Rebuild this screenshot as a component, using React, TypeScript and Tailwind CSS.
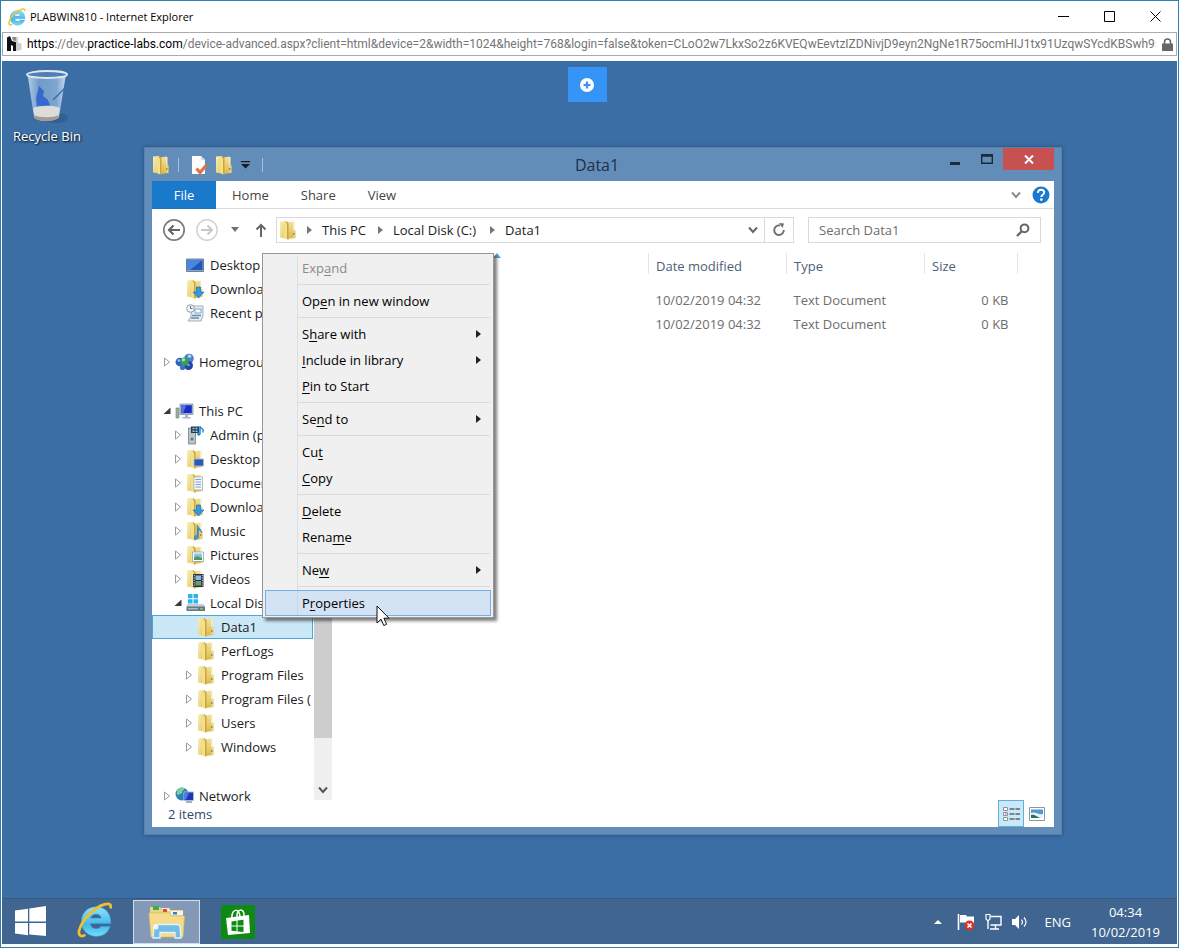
import { ReactNode } from "react";

const sans = "font-['Open_Sans','Noto_Sans',sans-serif]";

function IeLogo({ className }: { className: string }) {
  return (
    <svg viewBox="0 0 34 34" className={className} aria-hidden="true">
      <defs>
        <linearGradient id="ieBlue" x1="0" y1="0" x2="0" y2="1">
          <stop offset="0" stopColor="#8fe4fb" />
          <stop offset="0.6" stopColor="#45b6ea" />
          <stop offset="1" stopColor="#74dcf8" />
        </linearGradient>
      </defs>
      <path
        fill="url(#ieBlue)"
        stroke="#2f8fd0"
        strokeWidth=".5"
        fillRule="evenodd"
        d="M18 4.500C9.500 4.500 4 11 4 18.500S9.500 32.500 18 32.500c7 0 11.500-3.800 13.500-9.700h-9c-.8 1.500-2.200 2.300-4.500 2.300-3 0-5-1.600-5.200-4.600H32C32.500 11 27 4.500 18 4.500zM12.900 15.200C13.500 12.800 15.400 11.500 18 11.500s4.500 1.300 4.900 3.700z"
      />
      <path
        fill="none"
        stroke="#f0c02c"
        strokeWidth="2.600"
        strokeLinecap="round"
        d="M7 31.500C3 33.500 0.800 31 2.300 26 5 17 15 5.500 26 2.300c4-1.200 6.300-.5 5.800 2.700"
      />
    </svg>
  );
}

function Folder({ children }: { children?: ReactNode }) {
  return (
    <svg viewBox="0 0 18 20" className="h-5 w-[18px] shrink-0" aria-hidden="true">
      <defs>
        <linearGradient id="flap" x1="0" x2="1" y1="0" y2="1">
          <stop offset="0" stopColor="#fbf0b8" />
          <stop offset="1" stopColor="#e6c760" />
        </linearGradient>
        <linearGradient id="back" x1="0" x2="0" y1="0" y2="1">
          <stop offset="0" stopColor="#f3e09a" />
          <stop offset="1" stopColor="#dcb94f" />
        </linearGradient>
      </defs>
      <path d="M8 2.500l6.500-1v8l2 1V18l-8.500 1z" fill="url(#back)" />
      <path d="M14 2h1.500v8H14z" fill="#f8edb6" />
      <path d="M14.500 10.500h1.800v7.300l-1.800.2z" fill="#edd68a" />
      <path d="M1 1.500L7 1v17.500l-6-1z" fill="url(#flap)" />
      <path d="M7 1l2.500 2v17L7 18.500z" fill="#cda63a" />
      <path d="M5.200 2.500L8 3.500V19.500l-2.800-1.400z" fill="#f3df8e" />
      <path d="M14 13h1.500v2H14z" fill="#8c9a48" />
      {children}
    </svg>
  );
}

const desktopMark = <path d="M8 10h9.500v7H8z" fill="#2b59b8" stroke="#9dbbe0" strokeWidth=".9" />;
const downMark = (
  <path d="M10.500 8h4v5H18l-5.500 6L7 13h3.500z" fill="#2f9be8" stroke="#1c6fb5" strokeWidth=".7" />
);
const docMark = (
  <g>
    <path d="M8 4h8.500v13H8z" fill="#f6f8fb" stroke="#9aa6b4" strokeWidth=".7" />
    <path d="M9.500 6.500h5.500M9.500 9h5.500M9.500 11.500h5.500M9.500 14h5.500" stroke="#6f93c0" strokeWidth=".9" />
  </g>
);
const musicMark = (
  <path d="M11 4c1 3 5 3.500 4.500 8-.5-2-2-3-3-3v6.500c0 2-1.500 3-3 3S7.500 16 9 15s2 0 2-.5z" fill="#3c9ad6" stroke="#1f6a9f" strokeWidth=".4" />
);
const picMark = (
  <g>
    <path d="M6.500 7h11v9.500h-11z" fill="#fff" stroke="#8696a8" strokeWidth=".7" />
    <path d="M8 8.500h8V15H8z" fill="#8cc5ea" />
    <path d="M8 13l3-2 5 2v2H8z" fill="#4f9a5b" />
  </g>
);
const vidMark = (
  <g>
    <path d="M7 5h10.500v13H7z" fill="#2c3340" />
    <path d="M9.500 6.500h5.500v4.500H9.500z" fill="#8db8e6" />
    <path d="M9.500 12h5.500v4.500H9.500z" fill="#6aa06e" />
    <path d="M8.200 6v11M16.300 6v11" stroke="#dfe5ec" strokeWidth="1" strokeDasharray="1.200 1.200" />
  </g>
);

function Monitor() {
  return (
    <svg viewBox="0 0 18 20" className="h-5 w-[18px] shrink-0" aria-hidden="true">
      <path d="M.5 4h17v12.500H.5z" fill="#8fa9c2" stroke="#4d6f92" strokeWidth=".8" />
      <path d="M1.500 5h15v10h-15z" fill="#2456b4" />
      <path d="M1.500 5h15L4 15H1.500z" fill="#4b86dc" />
    </svg>
  );
}
function Recent() {
  return (
    <svg viewBox="0 0 18 20" className="h-5 w-[18px] shrink-0" aria-hidden="true">
      <path d="M6 3h11v10l-2 5H2l3-5z" fill="#e4edf5" stroke="#8a9cab" strokeWidth=".8" />
      <path d="M9 6h6v4H9z" fill="#fff" stroke="#7fa6c6" />
      <path d="M6 12.500h9M5 15h8" stroke="#6f8ba2" strokeWidth="1.300" />
      <circle cx="4.500" cy="5.500" r="3.800" fill="#f2f6f8" stroke="#8f9ca6" />
      <path d="M4.500 3v2.500h2" stroke="#5f6e79" fill="none" />
    </svg>
  );
}
function Homegroup() {
  return (
    <svg viewBox="0 0 20 20" className="h-5 w-5 shrink-0" aria-hidden="true">
      <circle cx="4.800" cy="10" r="4.300" fill="#2f62c0" />
      <circle cx="14" cy="6.500" r="4.800" fill="#4b7fd0" />
      <circle cx="13.500" cy="13.500" r="4.500" fill="#2346a0" />
      <circle cx="9.500" cy="9.500" r="4.300" fill="#35a052" />
      <circle cx="8.500" cy="7.800" r="1.700" fill="#a3e0b0" />
      <circle cx="14.500" cy="4.300" r="1.700" fill="#b7d4f5" />
      <circle cx="3.800" cy="8.500" r="1.300" fill="#9dc0ee" />
      <circle cx="13.500" cy="13" r="1.200" fill="#7ea1e4" />
      <circle cx="7.500" cy="15.500" r="2.600" fill="#3c6fd0" />
    </svg>
  );
}
function Pc() {
  return (
    <svg viewBox="0 0 20 20" className="h-5 w-5 shrink-0" aria-hidden="true">
      <path d="M1 7h3v10H1z" fill="#9fb09f" stroke="#6d7c6d" strokeWidth=".6" />
      <path d="M5 3h13v10.500H5z" fill="#b7c3cf" stroke="#7b8b9a" strokeWidth=".7" />
      <path d="M6.200 4.200h10.600v8H6.200z" fill="#1a2dc0" />
      <path d="M6.200 4.200h5l-3 8h-2z" fill="#5070ec" />
      <path d="M10 13.500h3V16h2.500v1.500h-8V16H10z" fill="#a9b5bf" />
    </svg>
  );
}
function Admin() {
  return (
    <svg viewBox="0 0 18 20" className="h-5 w-[18px] shrink-0" aria-hidden="true">
      <path d="M2.500 3h7v16h-7z" fill="#b9c4c9" stroke="#738088" strokeWidth=".8" />
      <circle cx="6" cy="14" r="1.500" fill="#69757c" />
      <path d="M5 1.500h8v6.500H5z" fill="#253a4e" />
      <path d="M6.500 2.800h2v1.500h-2zM9.500 2.800h2v1.500h-2zM6.500 5.500h2V7h-2zM9.500 5.500h2V7h-2z" fill="#9fc5e8" />
      <path d="M14 1v8M14 2l3 2.500v3" stroke="#2489cf" strokeWidth="1.500" fill="none" />
      <circle cx="12.800" cy="9" r="1.700" fill="#2489cf" />
    </svg>
  );
}
function Drive() {
  return (
    <svg viewBox="0 0 20 20" className="h-5 w-5 shrink-0" aria-hidden="true">
      <path d="M2 1h4.500v4.200H2zM7.500 1H12v4.200H7.500zM2 6.200h4.500v4.200H2zM7.500 6.200H12v4.200H7.500z" fill="#2cb4ee" />
      <path d="M1.500 11h16l1.500 3H.5z" fill="#c3ced6" />
      <path d="M.5 13.500H19V18H.5z" fill="#65788a" />
      <path d="M2 15h10v1.500H2z" fill="#a8bccb" />
      <path d="M14 15h3v1.500h-3z" fill="#6fd84f" />
    </svg>
  );
}
function Globe() {
  return (
    <svg viewBox="0 0 20 20" className="h-5 w-5 shrink-0" aria-hidden="true">
      <circle cx="7" cy="8" r="6.500" fill="#2a80bd" />
      <path d="M2.500 4c2-2 5-3 7.500-1.500-1 2-3 2-3 4s-3 1-4 3c-2-2-1-4-.5-5.500z" fill="#7fd096" />
      <path d="M9 6h9.500v8.500H9z" fill="#1b35b8" stroke="#a8bed8" />
      <path d="M10 7h4l-3 6.500h-1z" fill="#5377e2" />
      <path d="M11 16h6" stroke="#7f8e9c" strokeWidth="1.400" />
    </svg>
  );
}

function Twisty({ open }: { open: boolean }) {
  return (
    <svg viewBox="0 0 8 10" className="h-2.5 w-2 shrink-0" aria-hidden="true">
      {open ? (
        <path d="M7.500 1.500v6.500H.5z" fill="#3a3a3a" />
      ) : (
        <path d="M1.500 1L6.500 5 1.500 9z" fill="#fff" stroke="#9b9b9b" />
      )}
    </svg>
  );
}

type Row = { label: string; icon: ReactNode; pad: string; twist?: "open" | "closed"; gap?: boolean; selected?: boolean };
const l0 = "pl-[11px]";
const l1 = "pl-[22px]";
const l2 = "pl-[33px]";
const rows: Row[] = [
  { label: "Desktop", icon: <Monitor />, pad: l1 },
  { label: "Downloads", icon: <Folder>{downMark}</Folder>, pad: l1 },
  { label: "Recent places", icon: <Recent />, pad: l1 },
  { label: "Homegroup", icon: <Homegroup />, pad: l0, twist: "closed", gap: true },
  { label: "This PC", icon: <Pc />, pad: l0, twist: "open", gap: true },
  { label: "Admin (p", icon: <Admin />, pad: l1, twist: "closed" },
  { label: "Desktop", icon: <Folder>{desktopMark}</Folder>, pad: l1, twist: "closed" },
  { label: "Documents", icon: <Folder>{docMark}</Folder>, pad: l1, twist: "closed" },
  { label: "Downloads", icon: <Folder>{downMark}</Folder>, pad: l1, twist: "closed" },
  { label: "Music", icon: <Folder>{musicMark}</Folder>, pad: l1, twist: "closed" },
  { label: "Pictures", icon: <Folder>{picMark}</Folder>, pad: l1, twist: "closed" },
  { label: "Videos", icon: <Folder>{vidMark}</Folder>, pad: l1, twist: "closed" },
  { label: "Local Disk (C:)", icon: <Drive />, pad: l1, twist: "open" },
  { label: "Data1", icon: <Folder />, pad: l2, selected: true },
  { label: "PerfLogs", icon: <Folder />, pad: l2 },
  { label: "Program Files", icon: <Folder />, pad: l2, twist: "closed" },
  { label: "Program Files (", icon: <Folder />, pad: l2, twist: "closed" },
  { label: "Users", icon: <Folder />, pad: l2, twist: "closed" },
  { label: "Windows", icon: <Folder />, pad: l2, twist: "closed" },
  { label: "Network", icon: <Globe />, pad: l0, twist: "closed", gap: true },
];

function Tree() {
  return (
    <ul className="min-w-0 flex-1 overflow-x-clip pt-[3px]">
      {rows.map((r, i) => (
        <li
          key={i}
          className={`${r.gap ? "mt-[25px]" : ""} ${r.selected ? "bg-[#cbe8f6] outline outline-1 -outline-offset-1 outline-[#4aa7d6]" : ""} flex h-6 items-center whitespace-nowrap ${r.pad}`}
        >
          <span className="flex w-3 shrink-0">{r.twist && <Twisty open={r.twist === "open"} />}</span>
          <span className="flex w-[24px] shrink-0">{r.icon}</span>
          {r.label}
        </li>
      ))}
    </ul>
  );
}

type Item = { pre: string; key: string; post: string; sub?: boolean; sep?: boolean; off?: boolean; hot?: boolean };
const menu: Item[] = [
  { pre: "Exp", key: "a", post: "nd", off: true },
  { pre: "Op", key: "e", post: "n in new window", sep: true },
  { pre: "S", key: "h", post: "are with", sub: true, sep: true },
  { pre: "", key: "I", post: "nclude in library", sub: true },
  { pre: "", key: "P", post: "in to Start" },
  { pre: "Se", key: "n", post: "d to", sub: true, sep: true },
  { pre: "Cu", key: "t", post: "", sep: true },
  { pre: "", key: "C", post: "opy" },
  { pre: "", key: "D", post: "elete", sep: true },
  { pre: "Rena", key: "m", post: "e" },
  { pre: "Ne", key: "w", post: "", sub: true, sep: true },
  { pre: "P", key: "r", post: "operties", sep: true, hot: true },
];

function ContextMenu() {
  return (
    <div
      role="menu"
      className="absolute left-[110px] top-[3px] w-[232px] border border-[#979797] bg-[#f0f0f0] px-0.5 py-px shadow-[3px_3px_3px_rgba(0,0,0,0.5)]"
    >
      <span className="absolute bottom-0.5 left-[34px] top-0.5 w-px bg-[#dcdfe2]" />
      {menu.map((m, i) => (
        <div key={i}>
          {m.sep && (
            <div className="flex h-[7px] items-center pl-8 pr-px">
              <hr className="w-full border-[#d7d9dc]" />
            </div>
          )}
          <button
            role="menuitem"
            disabled={m.off}
            className={`relative flex h-[26px] w-full items-center border pl-9 pr-[9px] text-left ${m.hot ? "border-[#78aee5] bg-[#7fbcff]/25" : "border-transparent"} ${m.off ? "text-[#8a8a8a]" : "text-black"}`}
          >
            <span className="flex-1">
              {m.pre}
              <u className="underline-offset-2">{m.key}</u>
              {m.post}
            </span>
            {m.sub && (
              <svg viewBox="0 0 5 8" className="h-2 w-[5px]" aria-hidden="true">
                <path d="M0 0l5 4-5 4z" fill="#222" />
              </svg>
            )}
          </button>
        </div>
      ))}
      <svg viewBox="0 0 14 22" className="absolute left-[113px] top-[351px] h-[22px] w-3.5" aria-hidden="true">
        <path d="M1 1v17l4-3.800 2.800 6.300 2.800-1.200-2.700-6.100H13z" fill="#fff" stroke="#111" strokeWidth="1" />
      </svg>
    </div>
  );
}

function Crumb() {
  return (
    <svg viewBox="0 0 5 8" className="h-2 w-[5px] shrink-0" aria-hidden="true">
      <path d="M0 0l5 4-5 4z" fill="#777" />
    </svg>
  );
}
function Chevron({ className }: { className: string }) {
  return (
    <svg viewBox="0 0 10 8" className={className} aria-hidden="true">
      <path d="M1 1.500l4 4.500 4-4.500" fill="none" stroke="currentColor" strokeWidth="2" />
    </svg>
  );
}

function ExplorerWindow() {
  return (
    <section className="absolute bottom-[63px] left-[142px] right-[115px] top-[86px] flex flex-col border border-[#5680ad] bg-[#628db9] px-[7px] pb-[7px] text-[13px] text-[#1c1c1c] shadow-[0_0_4px_rgba(0,0,0,0.3)]">
      <header className="relative flex h-[33px] shrink-0 items-center">
        <Folder />
        <span className="ml-2 h-3.5 w-px bg-[#a6c0db]" />
        <button aria-label="Properties" className="ml-3">
          <svg viewBox="0 0 18 20" className="h-5 w-[18px]">
            <path d="M1 1h9l4 4v14H1z" fill="#fdfdfd" />
            <path d="M10 1v4h4" fill="#d0d8e0" />
            <path d="M5.500 13.500l3.500 4 6.500-7.500" fill="none" stroke="#e0714a" strokeWidth="3.200" />
          </svg>
        </button>
        <button aria-label="New folder" className="ml-1.5">
          <Folder />
        </button>
        <button aria-label="Customize" className="ml-2">
          <svg viewBox="0 0 9 8" className="h-2 w-[9px]">
            <path d="M0 0h9v1.300H0zM0 3h9L4.500 7.500z" fill="#1d1d1d" />
          </svg>
        </button>
        <span className="ml-3 h-3.5 w-px bg-[#a6c0db]" />
        <h1 className="absolute inset-x-0 text-center text-[16px] text-[#1f3147]">
          <span className="pr-3">Data1</span>
        </h1>
        <div className="absolute right-0 top-0 flex h-[22px] items-stretch">
          <button aria-label="Minimize" className="w-[31px] pl-2.5 pt-2">
            <svg viewBox="0 0 10 3" className="h-[3px] w-2.5"><path d="M0 0h10v3H0z" fill="#1d2a3a" /></svg>
          </button>
          <button aria-label="Maximize" className="w-8 pl-2.5">
            <svg viewBox="0 0 12 10" className="h-2.5 w-3">
              <path d="M.7.7h10.600v8.600H.7zM0 2h12" fill="none" stroke="#1d2a3a" strokeWidth="1.400" />
            </svg>
          </button>
          <button aria-label="Close" className="grid w-[51px] place-items-center bg-[#c75050]">
            <svg viewBox="0 0 10 9" className="h-[9px] w-2.5"><path d="M1 .5l8 8M9 .5l-8 8" stroke="#fff" strokeWidth="2" /></svg>
          </button>
        </div>
      </header>

      <div className="flex min-h-0 flex-1 flex-col bg-white">
        <nav className="flex h-7 shrink-0 items-center border-b border-[#dadbdc] text-[#444]">
          <button className="h-7 w-16 bg-[#1979ca] text-white">File</button>
          <button className="ml-4">Home</button>
          <button className="ml-8">Share</button>
          <button className="ml-8">View</button>
          <button aria-label="Expand ribbon" className="ml-auto mr-2.5 text-[#8c8c8c]">
            <Chevron className="h-2 w-3" />
          </button>
          <button aria-label="Help" className="mr-1">
            <svg viewBox="0 0 18 18" className="size-[18px]">
              <circle cx="9" cy="9" r="8.500" fill="#1b79cf" />
              <path d="M5.800 6.800C6 4.700 7.300 3.700 9.100 3.700c1.800 0 3.100 1 3.100 2.700 0 2.300-2.900 2.400-2.900 4.600" fill="none" stroke="#fff" strokeWidth="1.900" />
              <circle cx="9.300" cy="13.600" r="1.300" fill="#fff" />
            </svg>
          </button>
        </nav>

        <div className="flex h-[41px] shrink-0 items-center pl-2.5 pr-[13px]">
          <button aria-label="Back">
            <svg viewBox="0 0 24 24" className="size-6">
              <circle cx="12" cy="12" r="10.200" fill="none" stroke="#7d7d7d" strokeWidth="1.700" />
              <path d="M18 12H7.500M11.500 7.500L7 12l4.500 4.500" fill="none" stroke="#666" strokeWidth="2.200" />
            </svg>
          </button>
          <button aria-label="Forward" className="ml-[9px]">
            <svg viewBox="0 0 24 24" className="size-6">
              <circle cx="12" cy="12" r="10.200" fill="none" stroke="#d2d2d2" strokeWidth="1.500" />
              <path d="M6 12h10.500M12.500 7.500L17 12l-4.500 4.500" fill="none" stroke="#c8c8c8" strokeWidth="2" />
            </svg>
          </button>
          <button aria-label="Recent locations" className="ml-3">
            <svg viewBox="0 0 8 5" className="h-[5px] w-2"><path d="M0 0h8L4 5z" fill="#707070" /></svg>
          </button>
          <button aria-label="Up" className="ml-4">
            <svg viewBox="0 0 12 14" className="h-3.5 w-3">
              <path d="M6 14V2M1.500 6.500L6 2l4.500 4.500" fill="none" stroke="#666" strokeWidth="2" />
            </svg>
          </button>
          <div className="ml-[9px] flex h-[26px] min-w-0 flex-1 items-center border border-[#d9d9d9] pl-0.5">
            <Folder />
            <span className="w-2.5" />
            <Crumb />
            <button className="ml-2.5 mr-3">This PC</button>
            <Crumb />
            <button className="ml-2.5 mr-3.5">Local Disk (C:)</button>
            <Crumb />
            <button className="ml-2.5">Data1</button>
            <button aria-label="Previous locations" className="ml-auto mr-1.5 text-[#666]"><Chevron className="h-2 w-2.5" /></button>
            <button aria-label="Refresh" className="grid h-full w-[29px] place-items-center border-l border-[#d9d9d9]">
              <svg viewBox="0 0 14 14" className="size-3.5">
                <path d="M8 2.500A4.800 4.800 0 1 0 11.800 7" fill="none" stroke="#6e6e6e" strokeWidth="1.900" />
                <path d="M7 0l5 .5-1.500 4.500z" fill="#6e6e6e" />
              </svg>
            </button>
          </div>
          <label className="ml-3.5 flex h-[26px] w-[233px] items-center border border-[#d9d9d9] pl-2.5 pr-2.5">
            <input aria-label="Search Data1" placeholder="Search Data1" className="min-w-0 flex-1 outline-none placeholder:text-[#6d6d6d]" />
            <svg viewBox="0 0 14 14" className="size-3.5" aria-hidden="true">
              <circle cx="8.500" cy="5.300" r="3.900" fill="none" stroke="#666" strokeWidth="2" />
              <path d="M5.500 8.500L1 13" stroke="#666" strokeWidth="2.400" />
            </svg>
          </label>
        </div>

        <div className="relative flex min-h-0 flex-1">
          <div className="flex w-[161px] shrink-0"><Tree /></div>
          <div className="ml-px mt-1 flex w-[18px] shrink-0 flex-col items-center bg-[#f0f0f0]">
            <div className="w-full flex-[485] bg-[#cdcdcd]" />
            <div className="flex w-full basis-[62px] items-end justify-center pb-1.5 text-[#555]"><Chevron className="h-2 w-3" /></div>
          </div>
          <div className="flex-1 pr-9 pt-[3px]">
            <table className="w-full table-fixed border-collapse">
              <colgroup>
                <col />
                <col className="w-[138px]" />
                <col className="w-[138px]" />
                <col className="w-[93px]" />
              </colgroup>
              <thead>
                <tr className="h-5 text-left text-[#4c607a]">
                  <th className="border-r border-[#e5e5e5] p-0">
                    <svg viewBox="0 0 8 5" className="mb-4 ml-[161px] h-[5px] w-2"><path d="M0 5l4-5 4 5z" fill="#5fa3cf" /></svg>
                  </th>
                  <th className="border-r border-[#e5e5e5] pl-[7px] pt-1 font-normal">Date modified</th>
                  <th className="border-r border-[#e5e5e5] pl-[7px] pt-1 font-normal">Type</th>
                  <th className="border-r border-[#e5e5e5] pl-[7px] pt-1 font-normal">Size</th>
                </tr>
              </thead>
              <tbody className="text-[#6d6d6d] before:block before:h-[14px]">
                {[0, 1].map((n) => (
                  <tr key={n} className="h-6">
                    <td />
                    <td className="pl-[7px]">10/02/2019 04:32</td>
                    <td className="pl-[7px]">Text Document</td>
                    <td className="pr-[9px] text-right">0 KB</td>
                  </tr>
                ))}
              </tbody>
            </table>
          </div>
          <ContextMenu />
        </div>

        <footer className="flex h-[27px] shrink-0 items-center pl-4 text-[#30496a]">
          <span className="flex-1">2 items</span>
          <button aria-label="Details view" className="grid h-[27px] w-[26px] place-items-center border border-[#5bb0dc] bg-[#cbe8f6]">
            <svg viewBox="0 0 18 16" className="h-4 w-[18px]">
              <path d="M1.500 1.500h4v3h-4zM1.500 6.500h4v3h-4zM1.500 11.500h4v3h-4z" fill="#fff" stroke="#8494a3" />
              <path d="M3 7.500h1.500v1H3z" fill="#d33" />
              <path d="M7.500 3h5M13.500 3H18M7.500 8h5M13.500 8H18M7.500 13h5M13.500 13H18" stroke="#5a6570" strokeWidth="1.400" />
            </svg>
          </button>
          <button aria-label="Thumbnail view" className="ml-[5px] mr-[9px]">
            <svg viewBox="0 0 16 14" className="h-3.5 w-4">
              <path d="M.5.5h15v13H.5z" fill="#fff" stroke="#8a96a2" />
              <path d="M2 2.500h12v8.500H2z" fill="#4d97d3" />
              <path d="M2 6c4-2 7 2 12 1v4H2z" fill="#e9f3f8" />
              <path d="M2 8c3-1 6 1.500 9 3H2z" fill="#2f6f58" />
            </svg>
          </button>
        </footer>
      </div>
    </section>
  );
}

export default function App() {
  return (
    <div className={`${sans} flex min-h-screen flex-col border border-[#2f7fae] bg-white px-px pb-[3px] text-[12px] leading-4`}>
      <header className="flex h-[31px] shrink-0 items-center pl-1.5 text-black">
        <IeLogo className="size-[18px]" />
        <span className="ml-1 flex-1 text-[11px]">PLABWIN810 - Internet Explorer</span>
        <button aria-label="Minimize" className="w-[46px] pl-[19px]">
          <svg viewBox="0 0 11 11" className="size-[11px]"><path d="M0 5.500h11" stroke="#000" /></svg>
        </button>
        <button aria-label="Maximize" className="w-[46px] pl-[19px]">
          <svg viewBox="0 0 11 11" className="size-[11px]"><path d="M.5.5h10v10H.5z" fill="none" stroke="#000" /></svg>
        </button>
        <button aria-label="Close" className="w-[46px] pl-[19px]">
          <svg viewBox="0 0 11 11" className="size-[11px]"><path d="M.5.5l10 10M10.500.5l-10 10" stroke="#000" /></svg>
        </button>
      </header>
      <div className="mb-[5px] flex h-6 shrink-0 items-center border border-[#a9abae] pl-1 pr-[3px]">
        <svg viewBox="0 0 15 16" className="h-4 w-[15px] shrink-0" aria-hidden="true">
          <path d="M0 1.500L3 0l2 5 4 1v9H6v-5l-2-1v6H0z" fill="#111" />
          <path d="M5 1h4v4L6 4.500z" fill="#8b8b8b" />
          <path d="M9 1h2v5.500l3.500 1V14L9 15z" fill="#cdcdcd" />
        </svg>
        <p className="ml-[5px] min-w-0 flex-1 overflow-hidden whitespace-nowrap font-[Roboto,sans-serif] text-[12px] text-[#757575]">
          <span className="text-black">https</span>://dev.<span className="text-black">practice-labs.com</span>
          /device-advanced.aspx?client=html&amp;device=2&amp;width=1024&amp;height=768&amp;login=false&amp;token=CLoO2w7LkxSo2z6KVEQwEevtzIZDNivjD9eyn2NgNe1R75ocmHIJ1tx91UzqwSYcdKBSwh950
        </p>
        <svg viewBox="0 0 11 13" className="ml-1.5 h-[13px] w-[11px] shrink-0" aria-hidden="true">
          <path d="M0 5.500h11V13H0z" fill="#666" />
          <path d="M2.500 6V4a3 3 0 0 1 6 0v2" fill="none" stroke="#666" strokeWidth="1.600" />
        </svg>
      </div>

      <div className="flex flex-1 flex-col bg-[#3b6ea5]">
        <main className="relative flex-1">
          <button className="absolute left-1 top-2 flex w-[82px] flex-col items-center text-[13px] text-white [text-shadow:1px_1px_2px_#000]">
            <svg viewBox="0 0 46 56" className="h-14 w-[46px]" aria-hidden="true">
              <defs>
                <linearGradient id="glass" x1="0" x2="1" y1="0" y2="0">
                  <stop offset="0" stopColor="#b5cde6" />
                  <stop offset=".3" stopColor="#6f9bc9" />
                  <stop offset=".75" stopColor="#7ea6d0" />
                  <stop offset="1" stopColor="#c8daec" />
                </linearGradient>
              </defs>
              <ellipse cx="32" cy="49" rx="12" ry="5" fill="#2a527f" opacity=".5" />
              <path d="M3.500 5l6.500 43c1 5 23 5 25 0l7-43z" fill="url(#glass)" />
              <path d="M15 17l5 5-1 5 5 4 2 5-6 6-7-3-1-10z" fill="#2c60cf" opacity=".85" />
              <path d="M9 39c6-3 22-3 27 0l-1.500 9c-3 5-22 5-24 0z" fill="#dcdcd8" />
              <path d="M10 46c5 3 20 3 24.500 0l-.5 3c-3 4-20 4-23 0z" fill="#a39b92" />
              <path d="M41 19L29 31" stroke="#3c6ca3" strokeWidth="1.500" />
              <ellipse cx="23" cy="5.500" rx="20" ry="3.500" fill="#4f80b3" stroke="#dfe7ee" strokeWidth="1.800" />
            </svg>
            <span className="mt-[3px]">Recycle Bin</span>
          </button>
          <button aria-label="Add" className="absolute left-1/2 top-1.5 -ml-[22px] grid h-[35px] w-[39px] place-items-center bg-[#3794f7]">
            <svg viewBox="0 0 16 16" className="size-4">
              <circle cx="8" cy="8" r="7" fill="#fff" />
              <path d="M8 4.500v7M4.500 8h7" stroke="#3794f7" strokeWidth="2.200" />
            </svg>
          </button>
          <ExplorerWindow />
        </main>

        <footer className="flex h-[46px] shrink-0 items-center border-t border-[#38597f] bg-[#3f6590] text-[13px] text-white">
          <button aria-label="Start" className="ml-[13px]">
            <svg viewBox="0 0 32 32" className="size-8">
              <path d="M0 4.500l13-1.800v12.800H0zM14.300 2.500L31 0v15.500H14.300zM0 17h13v12.300L0 27.500zM14.300 17H31v13l-16.700-1.500z" fill="#fff" />
            </svg>
          </button>
          <button aria-label="Internet Explorer" className="ml-[30px] mb-1"><IeLogo className="size-9" /></button>
          <button aria-label="File Explorer" className="ml-5 grid h-11 w-[67px] place-items-center border border-[#d3dde9] bg-[#8499b8]">
            <svg viewBox="0 0 38 34" className="h-[34px] w-[38px]">
              <path d="M2 2h10l2 3h21v8H2z" fill="#e8d48a" />
              <path d="M5 1h6v4H5z" fill="#3fae49" />
              <path d="M13 3h8l2 3h-8z" fill="#f7edc0" />
              <path d="M15 4h4v3h-4z" fill="#d9502e" />
              <path d="M23 6h12v4H23z" fill="#f5f5ee" />
              <path d="M25 7h4v2.500h-4z" fill="#2c80d0" />
              <path d="M1 8h20l2 3h13.500L35 32H3z" fill="#f4dc8c" stroke="#dcbc58" strokeWidth=".7" />
              <path d="M6 22c0-2 1-2.500 3-2.500h20c2 0 3 .5 3 2.500l1 11h-6v-5.500H12V33H5z" fill="#72bce8" stroke="#dff3fd" strokeWidth="1.300" />
              <circle cx="8" cy="22" r="2.500" fill="#fff" opacity=".85" />
            </svg>
          </button>
          <button aria-label="Store" className="ml-[21px] grid size-[34px] place-items-center bg-[#0c8a12]">
            <svg viewBox="0 0 28 30" className="h-[30px] w-7">
              <path d="M2 11l23-3 1 18-22 2z" fill="#fff" />
              <path d="M8 11c-1-10 8-10 8-1M13 10c-1-9 8-9 7-1" fill="none" stroke="#fff" strokeWidth="1.500" />
              <path d="M7.500 14.500l5-.7v4.700h-5zM13.500 13.600l6-.8v5.700h-6zM7.500 19.500h5v4.800l-5-.5zM13.500 19.500h6v5.600l-6-.7z" fill="#0c8a12" />
            </svg>
          </button>
          <div className="ml-auto flex items-center">
            <button aria-label="Show hidden icons">
              <svg viewBox="0 0 8 5" className="h-[5px] w-2"><path d="M0 5l4-4 4 4z" fill="#fff" /></svg>
            </button>
            <svg viewBox="0 0 18 18" className="ml-[15px] size-[18px]" aria-hidden="true">
              <path d="M1.500 1v16" stroke="#fff" strokeWidth="1.600" />
              <path d="M3 2h6l1 1.500h7V11H9.500L8.500 9.500H3z" fill="#fff" />
              <circle cx="12.500" cy="12.500" r="5" fill="#d8332b" />
              <path d="M10.500 10.500l4 4M14.500 10.500l-4 4" stroke="#fff" strokeWidth="1.600" />
            </svg>
            <svg viewBox="0 0 18 18" className="ml-[9px] size-[18px]" aria-hidden="true">
              <path d="M6.500 3.500h10.500v8.500h-10.500M6 16h9M11.500 12V16M4 8v8" fill="none" stroke="#fff" strokeWidth="1.400" />
              <path d="M2 1.500h4v4.500l-2 2-2-2z" fill="none" stroke="#fff" strokeWidth="1.200" />
            </svg>
            <svg viewBox="0 0 18 18" className="ml-[9px] size-[18px]" aria-hidden="true">
              <path d="M1 6h3L8 2v14l-4-4H1z" fill="#fff" />
              <path d="M10.500 6.500q2 2.500 0 5M13 4.500q4 4.500 0 9" fill="none" stroke="#fff" strokeWidth="1.200" />
            </svg>
            <span className="ml-4">ENG</span>
            <time className="ml-5 mr-[17px] text-center leading-5">04:34<br />10/02/2019</time>
          </div>
        </footer>
      </div>
    </div>
  );
}
